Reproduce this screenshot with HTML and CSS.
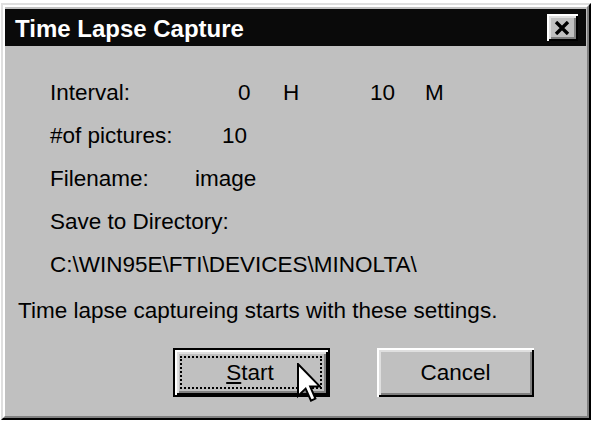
FILE: index.html
```html
<!DOCTYPE html>
<html>
<head>
<meta charset="utf-8">
<link rel="stylesheet" href="styles.css">
</head>
<body>
<div class="window">
  <div class="frame">
    <div class="titlebar">
      <span class="title">Time Lapse Capture</span>
      <span class="close">
        <svg width="16" height="14" viewBox="0 0 16 14"><path d="M2 1 L14 13 M14 1 L2 13" stroke="#000" stroke-width="3.4" fill="none"/></svg>
      </span>
    </div>
    <div class="content">
      <div class="fields">
        <div class="row"><span class="c-int">Interval:</span><span class="c-h">0</span><span class="c-hl">H</span><span class="c-m">10</span><span>M</span></div>
        <div class="row"><span class="c-pic">#of pictures:</span><span>10</span></div>
        <div class="row"><span class="c-file">Filename:</span><span>image</span></div>
        <div class="row">Save to Directory:</div>
        <div class="row">C:\WIN95E\FTI\DEVICES\MINOLTA\</div>
      </div>
      <div class="note">Time lapse captureing starts with these settings.</div>
      <div class="buttons">
        <div class="btn default">
          <div class="bevel">
            <div class="focus"><span><u>S</u>tart</span></div>
          </div>
          <svg class="cursor" width="24" height="40" viewBox="0 0 12 20"><path d="M0.5 0.5 L0.5 16.5 L4.3 12.8 L7 18.8 L9.2 17.8 L6.6 11.8 L11.5 11.8 Z" fill="#fff" stroke="#000" stroke-width="1" stroke-linejoin="miter"/></svg>
        </div>
        <div class="btn">
          <div class="bevel plain">
            <span>Cancel</span>
          </div>
        </div>
      </div>
    </div>
  </div>
</div>
</body>
</html>
```
FILE: styles.css
```css
html, body {
  margin: 0;
  padding: 0;
  background: #ffffff;
}
body {
  width: 595px;
  height: 423px;
  overflow: hidden;
  font-family: "Liberation Sans", Arial, sans-serif;
  font-size: 22.5px;
  color: #000;
}
.window {
  margin: 3px 0 0 1px;
  width: 590px;
  height: 417px;
  box-sizing: border-box;
  border: 2px solid;
  border-color: #dfdfdf #000 #000 #dfdfdf;
  background: #c0c0c0;
}
.frame {
  height: 100%;
  box-sizing: border-box;
  border: 2px solid;
  border-color: #fff #808080 #808080 #fff;
  padding: 2px 1px 2px 0;
}
.titlebar {
  height: 37px;
  background: #0a0a0a;
  display: flex;
  align-items: center;
  justify-content: space-between;
  padding-left: 10px;
}
.title {
  color: #fff;
  font-weight: bold;
  font-size: 24px;
  position: relative;
  top: 1px;
}
.close {
  width: 31px;
  height: 27px;
  margin-right: 8px;
  background: #c0c0c0;
  box-shadow: inset 2px 2px #fff, inset -2px -2px #000, inset 4px 4px #dfdfdf, inset -4px -4px #808080;
  display: flex;
  align-items: center;
  justify-content: center;
}
.close svg {
  display: block;
  margin-left: -1px;
}
.content {
  padding-top: 25px;
}
.fields {
  padding-left: 45px;
}
.row {
  line-height: 43px;
  height: 43px;
  display: flex;
  white-space: nowrap;
}
.c-int { width: 188px; }
.c-h { width: 45px; }
.c-hl { width: 87px; }
.c-m { width: 55px; }
.c-pic { width: 172px; }
.c-file { width: 145px; }
.note {
  padding-left: 13px;
  line-height: 43px;
  margin-top: 3px;
  white-space: nowrap;
}
.buttons {
  display: flex;
  gap: 47px;
  padding-left: 168px;
  margin-top: 16px;
}
.btn {
  width: 157px;
  height: 49px;
  box-sizing: border-box;
  position: relative;
}
.btn.default {
  border: 2px solid #000;
}
.bevel {
  height: 100%;
  box-sizing: border-box;
  background: #c0c0c0;
  box-shadow: inset 2px 2px #fff, inset -2px -2px #000, inset 4px 4px #dfdfdf, inset -4px -4px #808080;
  padding: 6px 6px 6px 5px;
}
.bevel.plain {
  display: flex;
  align-items: center;
  justify-content: center;
  padding: 0;
}
.focus {
  height: 100%;
  box-sizing: border-box;
  border: 2px dotted #000;
  display: flex;
  align-items: center;
  justify-content: center;
}
.focus span {
  position: relative;
  left: -1px;
}
u {
  text-decoration-thickness: 2px;
  text-underline-offset: 2px;
}
.cursor {
  position: absolute;
  left: 122px;
  top: 13px;
  display: block;
}
```
